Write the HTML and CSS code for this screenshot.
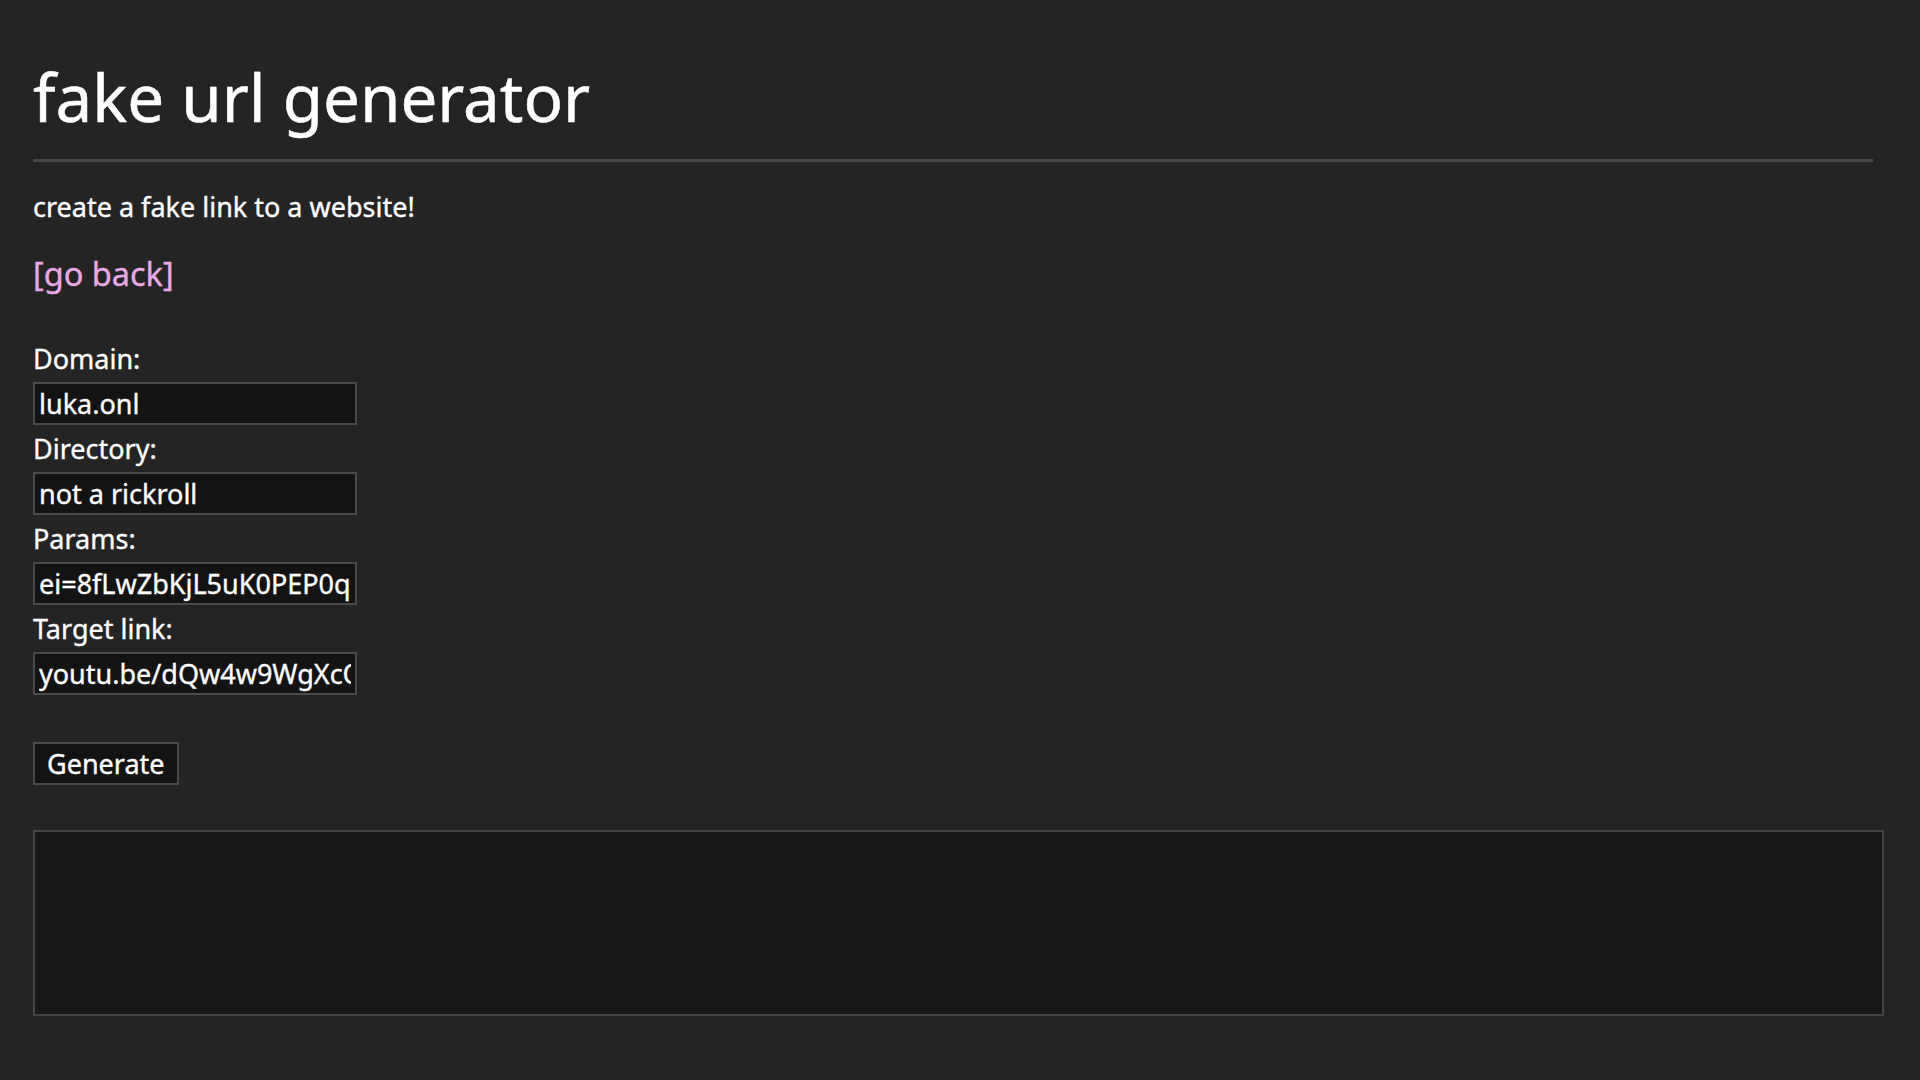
FILE: index.html
```html
<!DOCTYPE html>
<html lang="en">
<head>
<meta charset="utf-8">
<title>fake url generator</title>
<link rel="stylesheet" href="styles.css">
</head>
<body>
<main class="page">
  <h1 class="title">fake url generator</h1>
  <hr class="rule">
  <p class="intro">create a fake link to a website!</p>
  <a class="back" href="#">[go back]</a>
  <form class="form">
    <label class="label" for="domain">Domain:</label>
    <input class="field" id="domain" type="text" value="luka.onl">
    <label class="label" for="dir">Directory:</label>
    <input class="field" id="dir" type="text" value="not a rickroll">
    <label class="label" for="params">Params:</label>
    <input class="field" id="params" type="text" value="ei=8fLwZbKjL5uK0PEP0qeQ8Ak&amp;ved=0ahUKEwi">
    <label class="label" for="target">Target link:</label>
    <input class="field" id="target" type="text" value="youtu.be/dQw4w9WgXcQ">
    <button class="btn" type="button">Generate</button>
  </form>
  <textarea class="output" readonly></textarea>
</main>
</body>
</html>
```
FILE: styles.css
```css
html, body {
  margin: 0;
  padding: 0;
  background: #242424;
}
body {
  color: #ffffff;
  font-family: "Noto Sans", "Open Sans", sans-serif;
  font-size: 27px;
  line-height: 1.2;
  -webkit-text-stroke: 0.35px currentColor;
}
.page {
  padding: 0 47px 0 33px;
  display: flex;
  flex-direction: column;
  align-items: flex-start;
}
.title {
  font-size: 65.5px;
  font-weight: 400;
  line-height: 77px;
  margin: 58px 0 0;
  -webkit-text-stroke: 0.5px currentColor;
}
.rule {
  align-self: stretch;
  border: none;
  height: 3px;
  background: #464646;
  margin: 24px 0 0;
}
.intro {
  margin: 29px 0 0;
  line-height: 32px;
}
.back {
  margin-top: 32px;
  font-size: 32.5px;
  line-height: 38px;
  color: #eaa8e6;
  text-decoration: none;
}
.form {
  margin-top: 50px;
  display: flex;
  flex-direction: column;
  align-items: flex-start;
}
.label {
  line-height: 32px;
  margin-bottom: 7px;
}
.field {
  box-sizing: border-box;
  width: 324px;
  height: 43px;
  margin: 0 0 8px;
  padding: 0 4px;
  background: #131313;
  color: #ffffff;
  border: 2px solid #4a4a4a;
  border-radius: 0;
  font-family: inherit;
  font-size: 27px;
  outline: none;
  -webkit-text-stroke: 0.35px currentColor;
}
.btn {
  box-sizing: border-box;
  height: 43px;
  margin-top: 39px;
  padding: 0 12px;
  background: #131313;
  color: #ffffff;
  border: 2px solid #4a4a4a;
  border-radius: 0;
  font-family: inherit;
  font-size: 27px;
  line-height: 1;
  -webkit-text-stroke: 0.35px currentColor;
}
.output {
  box-sizing: border-box;
  width: 1851px;
  height: 186px;
  margin-top: 45px;
  padding: 4px;
  background: #181818;
  color: #ffffff;
  border: 2px solid #444444;
  border-radius: 0;
  resize: none;
  font-family: inherit;
  font-size: 27px;
}
```
